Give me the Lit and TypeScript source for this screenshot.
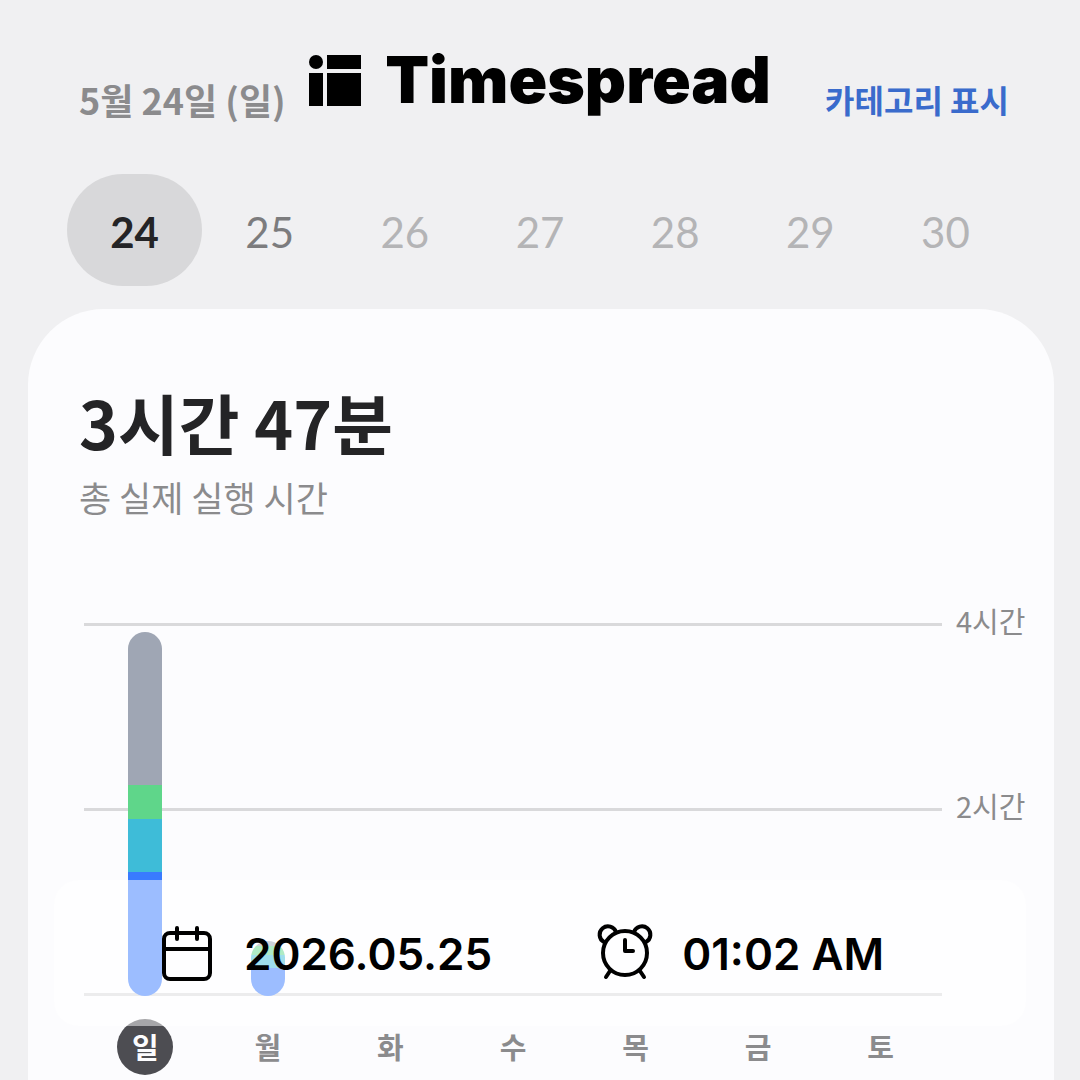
import { LitElement, html, css, svg } from "lit";
import { customElement, state } from "lit/decorators.js";
import { classMap } from "lit/directives/class-map.js";
import { styleMap } from "lit/directives/style-map.js";

interface Segment { kind: string; size: number; }
interface Day { label: string; date: number; segments: Segment[]; }

const DAYS: Day[] = [
  {
    label: "일", date: 24,
    segments: [
      { kind: "other", size: 153 }, { kind: "green", size: 34 },
      { kind: "teal", size: 53 }, { kind: "blue", size: 124 },
    ],
  },
  {
    label: "월", date: 25,
    segments: [
      { kind: "other", size: 5 }, { kind: "green", size: 9 },
      { kind: "teal", size: 13 }, { kind: "blue", size: 28 },
    ],
  },
  { label: "화", date: 26, segments: [] },
  { label: "수", date: 27, segments: [] },
  { label: "목", date: 28, segments: [] },
  { label: "금", date: 29, segments: [] },
  { label: "토", date: 30, segments: [] },
];

@customElement("brand-logo")
export class BrandLogo extends LitElement {
  static styles = css`
    :host { display: flex; align-items: center; gap: 24px; color: #000; }
    .mark { display: block; width: 52px; height: 52px; }
    .name {
      font: 900 64px/52px Inter, "Liberation Sans", sans-serif;
      white-space: nowrap;
    }
  `;
  render() {
    return html`
      <svg class="mark" viewBox="0 0 52 52" aria-hidden="true">
        <circle cx="7" cy="8" r="7"></circle>
        <rect x="18" y="1" width="34" height="14"></rect>
        <rect x="0" y="19" width="14" height="33"></rect>
        <rect x="18" y="19" width="34" height="33"></rect>
      </svg>
      <span class="name">Timespread</span>
    `;
  }
}

@customElement("usage-chart")
export class UsageChart extends LitElement {
  static styles = css`
    :host { display: block; }
    .chart { display: grid; grid-template-columns: 1fr 112px; }
    .plot { position: relative; height: 373px; }
    .lines, .bars { position: absolute; inset: 0; }
    .lines { display: flex; flex-direction: column; justify-content: space-between; }
    .line { height: 3px; background: #d9d9db; }
    .bars { display: grid; grid-template-columns: repeat(7, 1fr); align-items: end; justify-items: center; }
    .bar { width: 34px; border-radius: 17px; overflow: hidden; }
    .other { background: #9fa6b4; }
    .green { background: #5fd68a; }
    .teal { background: #3ebcd8; }
    .blue { background: #397bff; }
    .scale {
      display: flex; flex-direction: column; gap: 145px;
      margin-top: -23px; padding-left: 14px;
      font-size: 29px; line-height: 40px; color: #8b8b8d; white-space: nowrap;
    }
    .days { display: grid; grid-template-columns: repeat(7, 1fr); justify-items: center; margin-top: 23px; }
    .day {
      width: 56px; height: 56px; border-radius: 50%;
      display: flex; align-items: flex-start; justify-content: center;
      font-size: 29px; line-height: 54px; font-weight: 700; color: #8b8b8d;
    }
    .today { background: #4d4d52; color: #fcfcfe; }
  `;
  render() {
    return html`
      <div class="chart">
        <div class="plot">
          <div class="lines">
            <div class="line"></div><div class="line"></div><div class="line"></div>
          </div>
          <div class="bars">
            ${DAYS.map((d) => html`<div class="bar">${d.segments.map(
              (s) => html`<div class=${s.kind} style=${styleMap({ height: `${s.size}px` })}></div>`
            )}</div>`)}
          </div>
        </div>
        <div class="scale"><span>4시간</span><span>2시간</span></div>
        <div class="days">
          ${DAYS.map((d, i) => html`<span class=${classMap({ day: true, today: i === 0 })}>${d.label}</span>`)}
        </div>
      </div>
    `;
  }
}

@customElement("time-stamp")
export class TimeStamp extends LitElement {
  static styles = css`
    :host {
      display: flex; align-items: center; justify-content: space-between;
      box-sizing: border-box; height: 146px; padding: 0 142px 0 102px;
      border-radius: 24px; background: rgba(255, 255, 255, 0.5);
      font: 600 44px/58px Inter, "Liberation Sans", sans-serif; color: #000;
    }
    .item { display: flex; align-items: flex-end; gap: 28px; white-space: nowrap; }
    .icon { display: block; width: 60px; height: 60px; fill: none; stroke: #000; stroke-width: 4; stroke-linecap: round; stroke-linejoin: round; }
  `;
  render() {
    return html`
      <div class="item">
        <svg class="icon" viewBox="0 0 60 60" aria-hidden="true">
          ${svg`<rect x="8" y="10" width="46" height="46" rx="6"></rect>
          <path d="M8 26h46M21 5v11M41 5v11"></path>`}
        </svg>
        <time datetime="2026-05-25">2026.05.25</time>
      </div>
      <div class="item">
        <svg class="icon" viewBox="0 0 60 60" aria-hidden="true">
          ${svg`<circle cx="31" cy="30" r="22"></circle>
          <path d="M31 17v11h8M16 48l-4 6M46 48l4 6"></path>
          <path d="M10 19A8.4 8.4 0 1 1 22 9M40 9A8.4 8.4 0 1 1 52 19"></path>`}
        </svg>
        <time datetime="01:02">01:02 AM</time>
      </div>
    `;
  }
}

@customElement("app-root")
export class AppRoot extends LitElement {
  @state() private selected = 24;

  static styles = css`
    :host {
      display: block; position: relative; box-sizing: border-box;
      height: 100vh; overflow: hidden; background: #f0f0f2;
      font-family: "Noto Sans CJK KR", "Noto Sans", sans-serif;
    }
    .top {
      display: flex; align-items: center; justify-content: space-between;
      padding: 75px 71px 0 79px;
    }
    .date { font-size: 36px; line-height: 48px; font-weight: 700; color: #8b8b8d; }
    button { border: 0; margin: 0; padding: 0; background: none; font: inherit; cursor: pointer; }
    .toggle { font-size: 32px; line-height: 48px; font-weight: 700; color: #3a6bcc; }
    .week { display: grid; grid-template-columns: repeat(7, 1fr); padding: 51px 67px 0; }
    .pick { height: 112px; padding-top: 3px; border-radius: 56px; font-family: Lato, sans-serif; font-size: 42px; line-height: 56px; color: #b4b4b6; }
    .past { color: #7c7c7e; }
    .chosen { background: #d8d8da; color: #242426; font-weight: 700; }
    .card { margin: 23px 26px 0 28px; padding: 72px 0 40px 51px; border-radius: 76px 76px 0 0; background: #fcfcfe; }
    h1 { margin: 0; font-size: 66px; line-height: 80px; font-weight: 700; color: #242426; }
    .sub { margin: 12px 0 0; font-size: 35px; line-height: 48px; color: #8b8b8d; }
    .usage { margin: 102px 0 0 5px; }
    .brand { position: absolute; top: 54px; left: 0; right: 0; justify-content: center; }
    .stamp { position: absolute; left: 54px; right: 54px; bottom: 54px; }
  `;

  render() {
    return html`
      <header class="top">
        <span class="date">5월 24일 (일)</span>
        <button class="toggle" type="button">카테고리 표시</button>
      </header>
      <nav class="week">
        ${DAYS.map((d) => html`<button type="button"
          class=${classMap({ pick: true, past: d.date <= 25, chosen: d.date === this.selected })}
          @click=${() => { this.selected = d.date; }}>${d.date}</button>`)}
      </nav>
      <main class="card">
        <h1>3시간 47분</h1>
        <p class="sub">총 실제 실행 시간</p>
        <usage-chart class="usage"></usage-chart>
      </main>
      <brand-logo class="brand"></brand-logo>
      <time-stamp class="stamp"></time-stamp>
    `;
  }
}
